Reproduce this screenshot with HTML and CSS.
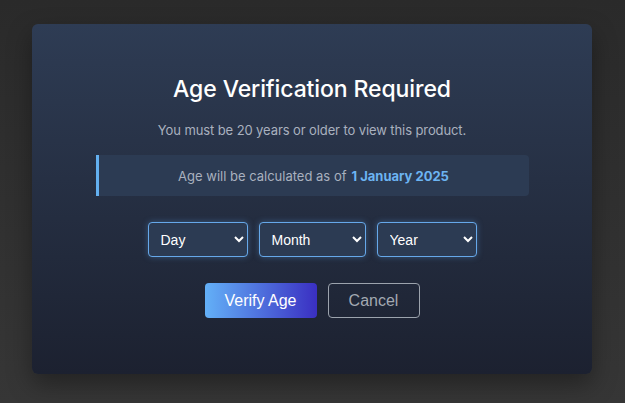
FILE: index.html
```html
<!DOCTYPE html>
<html lang="en">
<head>
<meta charset="utf-8">
<title>Age Verification</title>
<link rel="stylesheet" href="styles.css">
</head>
<body>
<div class="modal">
  <h1 class="title">Age Verification Required</h1>
  <p class="subtitle">You must be 20 years or older to view this product.</p>
  <div class="info">Age will be calculated as of <strong class="date">1 January 2025</strong></div>
  <div class="selects">
    <select class="sel sel-day"><option>Day</option></select>
    <select class="sel sel-month"><option>Month</option></select>
    <select class="sel sel-year"><option>Year</option></select>
  </div>
  <div class="actions">
    <button class="btn btn-primary">Verify Age</button>
    <button class="btn btn-cancel">Cancel</button>
  </div>
</div>
</body>
</html>
```
FILE: styles.css
```css
html, body { margin: 0; padding: 0; }
body {
  width: 625px;
  height: 403px;
  background: linear-gradient(180deg, #2a2a2a 0%, #363636 100%);
  display: flex;
  justify-content: flex-start;
  align-items: flex-start;
  padding: 24px 0 0 32px;
  box-sizing: border-box;
  font-family: Inter, "Noto Sans", sans-serif;
}
.modal {
  width: 560px;
  height: 350px;
  box-sizing: border-box;
  border-radius: 6px;
  background: linear-gradient(180deg, #2e3c54 0%, #1c2130 100%);
  box-shadow: 0 10px 25px rgba(0,0,0,0.35);
  display: flex;
  flex-direction: column;
  align-items: center;
  padding-top: 49px;
}
.title {
  margin: 0;
  font-size: 23px;
  font-weight: 500;
  line-height: 32px;
  color: #ffffff;
  letter-spacing: -0.1px;
}
.subtitle {
  margin: 16px 0 0;
  font-size: 13px;
  line-height: 18px;
  color: #a9b1bf;
  letter-spacing: -0.1px;
}
.info {
  margin-top: 16px;
  width: 433px;
  height: 41px;
  box-sizing: border-box;
  border-left: 3px solid #63b0f0;
  border-radius: 0 4px 4px 0;
  background: #2c3b53;
  display: flex;
  align-items: center;
  justify-content: center;
  font-size: 13px;
  color: #a9b1bf;
}
.date {
  color: #6cb4f2;
  font-weight: 700;
  margin-left: 5px;
}
.selects {
  margin-top: 26px;
  display: flex;
  gap: 11px;
}
.sel {
  height: 35px;
  box-sizing: border-box;
  border: 1px solid #66a8ea;
  border-radius: 4px;
  background: #2c3b53;
  color: #ffffff;
  font-family: "Liberation Sans", Arial, sans-serif;
  font-size: 14px;
  padding: 0 8px;
  box-shadow: 0 0 6px rgba(99, 170, 240, 0.35);
}
.sel-day { width: 100px; }
.sel-month { width: 107px; }
.sel-year { width: 100px; }
.actions {
  margin-top: 26px;
  display: flex;
  gap: 11px;
}
.btn {
  height: 35px;
  box-sizing: border-box;
  border-radius: 4px;
  font-family: "Liberation Sans", Arial, sans-serif;
  font-size: 16px;
  cursor: pointer;
}
.btn-primary {
  width: 112px;
  border: none;
  color: #ffffff;
  background: linear-gradient(90deg, #63b0f7 0%, #3a2fc2 100%);
}
.btn-cancel {
  width: 92px;
  border: 1px solid #9ca3ad;
  background: transparent;
  color: #a3a9b2;
}
```
